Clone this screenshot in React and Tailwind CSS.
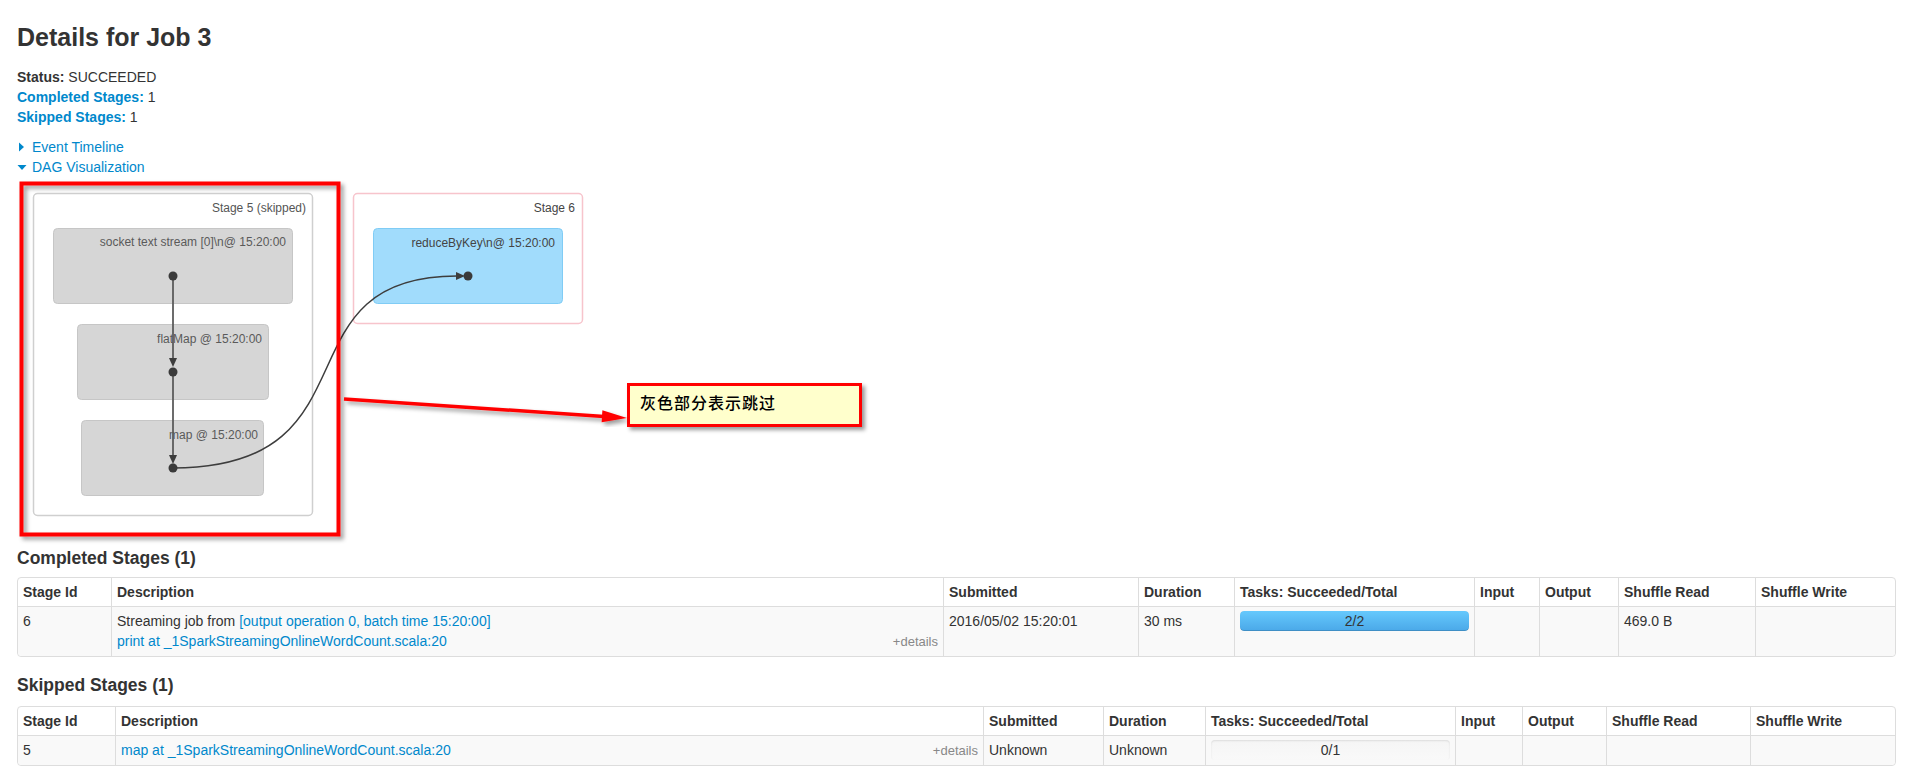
import React from "react";

const link = "text-[#0088cc]";

function Progress({ done, total }) {
  const pct = (done / total) * 100;
  return (
    <div className="relative h-[20px] overflow-hidden rounded-[4px] bg-gradient-to-b from-[#f5f5f5] to-[#f9f9f9] shadow-[inset_0_1px_2px_rgba(0,0,0,0.1)]">
      {pct > 0 && (
        <div
          className="absolute inset-y-0 left-0 rounded-[4px] bg-gradient-to-b from-[#66c9fd] to-[#4aa8e8] shadow-[inset_0_-1px_0_rgba(0,0,0,0.15)]"
          style={{ width: pct + "%" }}
        />
      )}
      <span className="relative block text-center leading-[20px] text-[#333]">
        {done}/{total}
      </span>
    </div>
  );
}

function StageTable({ widths, rows }) {
  const heads = ["Stage Id", "Description", "Submitted", "Duration", "Tasks: Succeeded/Total", "Input", "Output", "Shuffle Read", "Shuffle Write"];
  return (
    <table className="w-full table-fixed border-separate border-spacing-0 rounded-[4px] border border-[#ddd]">
      <thead>
        <tr>
          {heads.map((h, i) => (
            <th key={h} className={`${widths[i]} px-[5px] py-[4px] text-left align-top font-bold ${i ? "border-l border-[#ddd]" : ""}`}>
              {h}
            </th>
          ))}
        </tr>
      </thead>
      <tbody>
        {rows.map((r, ri) => (
          <tr key={ri}>
            {r.map((c, i) => (
              <td key={i} className={`border-t border-[#ddd] bg-[#f9f9f9] px-[5px] py-[4px] text-left align-top ${i ? "border-l" : "rounded-bl-[4px]"} ${i === 8 ? "rounded-br-[4px]" : ""}`}>
                {c}
              </td>
            ))}
          </tr>
        ))}
      </tbody>
    </table>
  );
}

function Dag() {
  return (
    <div className="relative h-[371px]">
      <svg width="900" height="371" className="block" style={{ fontFamily: "'Liberation Sans', Arial, sans-serif" }}>
        <defs>
          <filter id="shadow" x="-10%" y="-10%" width="130%" height="130%">
            <feDropShadow dx="3" dy="3" stdDeviation="2" floodColor="#000" floodOpacity="0.4" />
          </filter>
        </defs>
        <g transform="translate(-17 -177)">
          {/* stage 5 */}
          <rect x="33.5" y="193.5" width="279" height="322" rx="4" fill="#fff" stroke="#cfcfcf" strokeWidth="1.5" />
          <text x="306" y="212" textAnchor="end" fontSize="12" fill="#555">Stage 5 (skipped)</text>
          <rect x="53.5" y="228.5" width="239" height="75" rx="4" fill="#d6d6d6" stroke="#c6c6c6" />
          <text x="286" y="246" textAnchor="end" fontSize="12" fill="#5a5a5a">{"socket text stream [0]\\n@ 15:20:00"}</text>
          <rect x="77.5" y="324.5" width="191" height="75" rx="4" fill="#d6d6d6" stroke="#c6c6c6" />
          <text x="262" y="343" textAnchor="end" fontSize="12" fill="#5a5a5a">flatMap @ 15:20:00</text>
          <rect x="81.5" y="420.5" width="182" height="75" rx="4" fill="#d6d6d6" stroke="#c6c6c6" />
          <text x="258" y="439" textAnchor="end" fontSize="12" fill="#5a5a5a">map @ 15:20:00</text>

          {/* stage 6 */}
          <rect x="353.5" y="193.5" width="229" height="130" rx="4" fill="#fff" stroke="#f7c4cc" strokeWidth="1.5" />
          <text x="575" y="212" textAnchor="end" fontSize="12" fill="#444">Stage 6</text>
          <rect x="373.5" y="228.5" width="189" height="75" rx="4" fill="#a1dcfc" stroke="#80ccf5" />
          <text x="555" y="247" textAnchor="end" fontSize="12" fill="#444">{"reduceByKey\\n@ 15:20:00"}</text>

          {/* edges */}
          <line x1="173" y1="276" x2="173" y2="360" stroke="#5c5c5c" strokeWidth="1.8" />
          <polygon points="169,358 177,358 173,367" fill="#3d3d3d" />
          <line x1="173" y1="372" x2="173" y2="456" stroke="#5c5c5c" strokeWidth="1.8" />
          <polygon points="169,455 177,455 173,464" fill="#3d3d3d" />
          <path d="M173,468 C382,468 274,276 457,276" fill="none" stroke="#3d3d3d" strokeWidth="1.5" />
          <polygon points="456,272 456,280 465,276" fill="#3d3d3d" />
          <circle cx="173" cy="276" r="4.5" fill="#3a3a3a" />
          <circle cx="173" cy="372" r="4.5" fill="#3a3a3a" />
          <circle cx="173" cy="468" r="4.5" fill="#3a3a3a" />
          <circle cx="468" cy="276" r="4.5" fill="#3a3a3a" />

          {/* annotation */}
          <rect x="21.5" y="183.5" width="317" height="351" fill="none" stroke="#ff0000" strokeWidth="4" filter="url(#shadow)" />
          <g filter="url(#shadow)">
            <line x1="344" y1="399" x2="604" y2="416.5" stroke="#ff0000" strokeWidth="3.5" />
            <polygon points="602.4,410.3 601.6,422.3 627,418" fill="#ff0000" />
          </g>
        </g>
      </svg>
      <div className="absolute left-[610px] top-[206px] h-[44px] w-[235px] border-[3px] border-[#ff0000] bg-[#ffffcc] pl-[10px] pt-[5px] text-[16px] font-medium leading-[22px] tracking-[1px] text-black shadow-[3px_3px_4px_rgba(0,0,0,0.4)] font-['Noto_Sans_CJK_SC',sans-serif]">
        灰色部分表示跳过
      </div>
    </div>
  );
}

export default function App() {
  const completedWidths = ["w-[93px]", "w-[832px]", "w-[195px]", "w-[96px]", "w-[240px]", "w-[65px]", "w-[79px]", "w-[137px]", ""];
  const skippedWidths = ["w-[97px]", "w-[868px]", "w-[120px]", "w-[102px]", "w-[250px]", "w-[67px]", "w-[84px]", "w-[144px]", ""];

  const details = <span className="text-[13px] text-[#888]">+details</span>;

  const completedRows = [
    [
      "6",
      <div>
        <div>
          Streaming job from <span className={link}>[output operation 0, batch time 15:20:00]</span>
        </div>
        <div className="flex items-baseline justify-between">
          <span className={link}>print at _1SparkStreamingOnlineWordCount.scala:20</span>
          {details}
        </div>
      </div>,
      "2016/05/02 15:20:01",
      "30 ms",
      <Progress done={2} total={2} />,
      "",
      "",
      "469.0 B",
      "",
    ],
  ];

  const skippedRows = [
    [
      "5",
      <div className="flex items-baseline justify-between">
        <span className={link}>map at _1SparkStreamingOnlineWordCount.scala:20</span>
        {details}
      </div>,
      "Unknown",
      "Unknown",
      <Progress done={0} total={1} />,
      "",
      "",
      "",
      "",
    ],
  ];

  return (
    <div className="min-h-screen bg-white pl-[17px] pr-[14px] pt-[17px] text-[14px] leading-[20px] text-[#333] font-['Liberation_Sans',Arial,sans-serif]">
      <h3 className="text-[25px] font-bold leading-[40px]">Details for Job 3</h3>

      <ul className="mt-[10px]">
        <li>
          <strong>Status:</strong> SUCCEEDED
        </li>
        <li>
          <span className={`font-bold ${link}`}>Completed Stages:</span> 1
        </li>
        <li>
          <span className={`font-bold ${link}`}>Skipped Stages:</span> 1
        </li>
      </ul>

      <div className={`mt-[10px] ${link}`}>
        <div className="flex items-center">
          <svg width="15" height="10">
            <polygon points="2,0.5 7,5 2,9.5" fill="#0088cc" />
          </svg>
          <span>Event Timeline</span>
        </div>
        <div className="flex items-center">
          <svg width="15" height="10">
            <polygon points="0.5,3 9.5,3 5,8" fill="#0088cc" />
          </svg>
          <span>DAG Visualization</span>
        </div>
      </div>

      <Dag />

      <h4 className="text-[17.5px] font-bold leading-[20px]">Completed Stages (1)</h4>
      <div className="mt-[9px]">
        <StageTable widths={completedWidths} rows={completedRows} />
      </div>

      <h4 className="mt-[18px] text-[17.5px] font-bold leading-[20px]">Skipped Stages (1)</h4>
      <div className="mt-[11px]">
        <StageTable widths={skippedWidths} rows={skippedRows} />
      </div>
    </div>
  );
}
